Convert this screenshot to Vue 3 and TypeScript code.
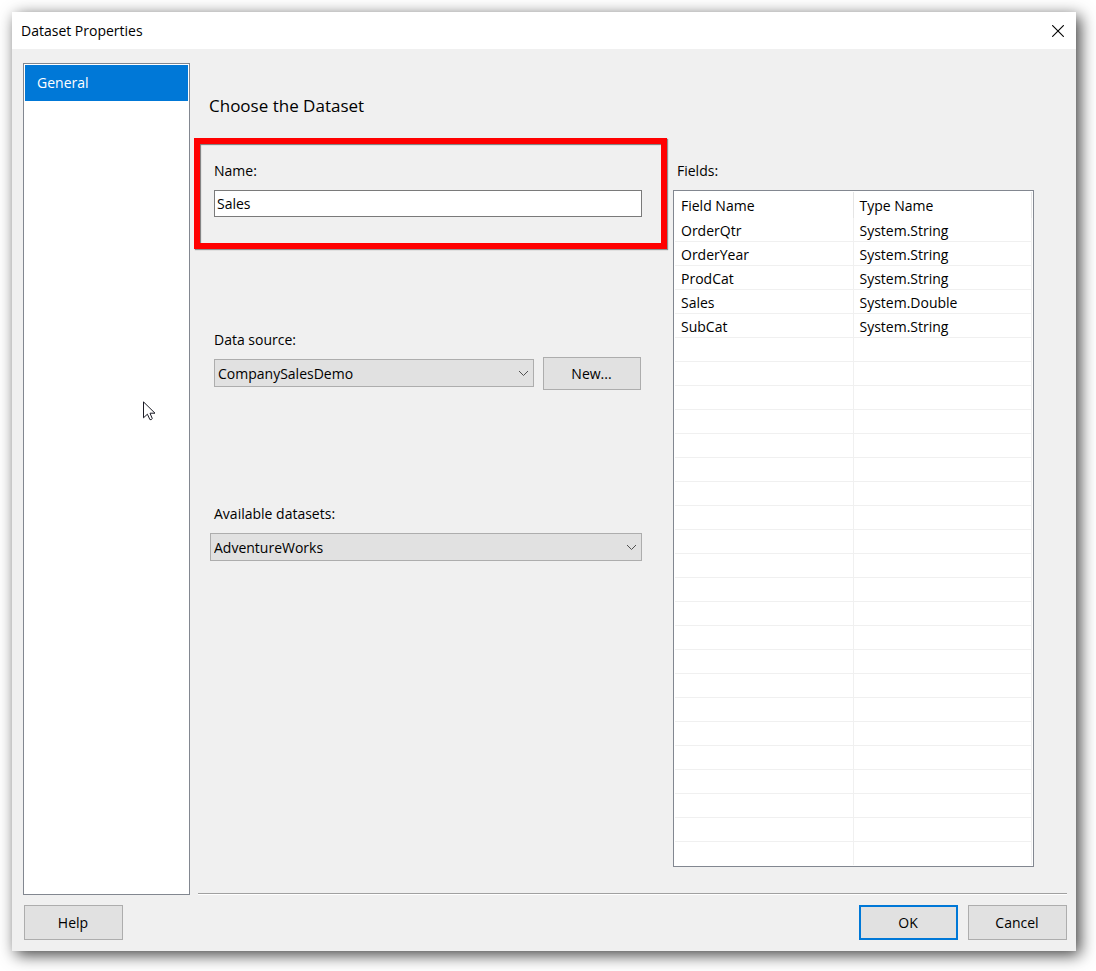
<script setup lang="ts">
import { ref } from 'vue'

interface Field {
  name: string
  type: string
}

const pages = ['General']
const activePage = ref('General')
const datasetName = ref('Sales')
const dataSource = ref('CompanySalesDemo')
const dataset = ref('AdventureWorks')

const fields: Field[] = [
  { name: 'OrderQtr', type: 'System.String' },
  { name: 'OrderYear', type: 'System.String' },
  { name: 'ProdCat', type: 'System.String' },
  { name: 'Sales', type: 'System.Double' },
  { name: 'SubCat', type: 'System.String' },
]
</script>

<template>
  <div class="screen">
    <section class="dialog" role="dialog" aria-labelledby="dialog-title">
      <header class="titlebar">
        <h1 id="dialog-title">Dataset Properties</h1>
        <button class="close" type="button" aria-label="Close">
          <svg width="12" height="12" viewBox="0 0 12 12" aria-hidden="true">
            <path d="M0.2 0.2L11.8 11.8M11.8 0.2L0.2 11.8" fill="none" stroke="#000" stroke-width="1.1" />
          </svg>
        </button>
      </header>

      <div class="body">
        <nav class="pages" aria-label="Pages">
          <button
            v-for="page in pages"
            :key="page"
            type="button"
            class="page"
            :class="{ active: page === activePage }"
            @click="activePage = page"
          >
            {{ page }}
          </button>
          <svg class="pointer" width="13" height="20" viewBox="0 0 13 20" aria-hidden="true">
            <path
              d="M0.5 0.9V16.8L4.4 13.2L6.9 18.6Q8.2 19.2 9.3 17.6L7 12.2H12Z"
              fill="#fff"
              stroke="#1a1a24"
              stroke-width="1"
            />
          </svg>
        </nav>

        <main class="content">
          <h2>Choose the Dataset</h2>
          <div class="columns">
            <form class="form" @submit.prevent>
              <div class="highlight">
                <label for="name">Name:</label>
                <input id="name" v-model="datasetName" type="text" />
              </div>

              <div class="group source">
                <label for="source">Data source:</label>
                <div class="row">
                  <div class="combo">
                    <select id="source" v-model="dataSource">
                      <option>CompanySalesDemo</option>
                    </select>
                    <svg class="chevron" width="11" height="7" viewBox="0 0 11 7" aria-hidden="true">
                      <path d="M1 1L5.5 5.5L10 1" fill="none" stroke="#505050" stroke-width="1" />
                    </svg>
                  </div>
                  <button class="btn small" type="button">New...</button>
                </div>
              </div>

              <div class="group available">
                <label for="dataset">Available datasets:</label>
                <div class="combo">
                  <select id="dataset" v-model="dataset">
                    <option>AdventureWorks</option>
                  </select>
                  <svg class="chevron" width="11" height="7" viewBox="0 0 11 7" aria-hidden="true">
                    <path d="M1 1L5.5 5.5L10 1" fill="none" stroke="#505050" stroke-width="1" />
                  </svg>
                </div>
              </div>
            </form>

            <section class="fields">
              <h3 id="fields-label">Fields:</h3>
              <div class="list">
                <div class="grid">
                  <table aria-labelledby="fields-label">
                    <thead>
                      <tr>
                        <th scope="col">Field Name</th>
                        <th scope="col">Type Name</th>
                      </tr>
                    </thead>
                    <tbody>
                      <tr v-for="field in fields" :key="field.name">
                        <td>{{ field.name }}</td>
                        <td>{{ field.type }}</td>
                      </tr>
                    </tbody>
                  </table>
                </div>
              </div>
            </section>
          </div>
          <hr />
        </main>
      </div>

      <footer class="actions">
        <button class="btn help" type="button">Help</button>
        <button class="btn primary" type="button">OK</button>
        <button class="btn" type="button">Cancel</button>
      </footer>
    </section>
  </div>
</template>

<style>
body {
  background: #fff;
}
</style>

<style scoped>
* {
  box-sizing: border-box;
}

.screen {
  display: flex;
  min-height: 100vh;
  padding: 12px 20px 20px 12px;
  overflow: hidden;
  color: #000;
  font-family: 'Segoe UI', 'Open Sans', 'Noto Sans', sans-serif;
  font-size: 14px;
  line-height: 20px;
}

h1,
h2,
h3 {
  margin: 0;
  font-size: 14px;
  font-weight: 400;
}

button,
input,
select {
  font: inherit;
  color: inherit;
  border-radius: 0;
}

.dialog {
  flex: 1;
  display: flex;
  flex-direction: column;
  min-width: 0;
  background: #f0f0f0;
  box-shadow: 4px 4px 15px rgba(0, 0, 0, 0.75);
}

.titlebar {
  display: flex;
  align-items: center;
  justify-content: space-between;
  height: 37px;
  padding: 0 10px 0 9px;
  background: #fff;
}

.close {
  display: flex;
  padding: 2px;
  border: 0;
  background: none;
}

.body {
  flex: 1;
  display: flex;
  padding: 14px 9px 0 11px;
}

.pages {
  position: relative;
  flex: 0 0 167px;
  padding: 1px;
  border: 1px solid #828790;
  background: #fff;
}

.page {
  display: block;
  width: 100%;
  height: 36px;
  padding: 0 12px;
  border: 0;
  background: none;
  text-align: left;
}

.page.active {
  background: #0078d7;
  color: #fff;
}

.pointer {
  position: absolute;
  top: 337px;
  left: 119px;
}

.content {
  flex: 1;
  display: flex;
  flex-direction: column;
  min-width: 0;
}

h2 {
  margin: 31px 0 20px 19px;
  font-size: 17px;
  line-height: 24px;
}

.columns {
  flex: 1;
  display: grid;
  grid-template-columns: 473fr 361fr;
  gap: 6px;
  margin: 0 33px 26px 4px;
}

.form {
  display: flex;
  flex-direction: column;
}

label {
  display: block;
  margin-bottom: 9px;
}

.highlight {
  padding: 17px 19px 26px 14px;
  border: 6px solid #f00;
  box-shadow:
    1px 1px 1px rgba(0, 0, 0, 0.4),
    inset 1px 1px 1px rgba(0, 0, 0, 0.5);
}

.highlight input {
  display: block;
  width: 100%;
  height: 27px;
  padding: 0 2px;
  border: 1px solid #7a7a7a;
  background: #fff;
}

.group {
  padding: 0 25px 0 20px;
}

.source {
  margin-top: 81px;
  padding-right: 26px;
}

.source label {
  margin-bottom: 7px;
}

.available {
  margin-top: 114px;
  padding-left: 16px;
}

.available label {
  padding-left: 4px;
}

.row {
  display: flex;
  align-items: flex-start;
  gap: 9px;
}

.row .combo {
  margin-top: 2px;
}

.combo {
  flex: 1;
  display: grid;
  align-items: center;
}

.combo > * {
  grid-area: 1 / 1;
}

.combo select {
  width: 100%;
  height: 28px;
  padding: 2px 24px 0 3px;
  border: 1px solid #adadad;
  background: #e1e1e1;
  appearance: none;
}

.chevron {
  justify-self: end;
  margin-right: 5px;
  pointer-events: none;
}

.btn {
  width: 99px;
  height: 35px;
  padding: 0 1px 0 0;
  border: 1px solid #adadad;
  background: #e1e1e1;
}

.btn.small {
  width: 98px;
  height: 33px;
}

.btn.primary {
  border: 2px solid #0078d7;
}

.fields {
  display: flex;
  flex-direction: column;
  padding-top: 23px;
}

h3 {
  margin: 0 0 9px 4px;
}

.list {
  flex: 1;
  display: flex;
  padding: 1px;
  border: 1px solid #828790;
  background: #fff;
}

/* Grid lines carry on below the last record down to the end of the list. */
.grid {
  flex: 1;
  background:
    linear-gradient(#f0f0f0, #f0f0f0) 50% 0 / 1px 100% no-repeat,
    linear-gradient(#f0f0f0, #f0f0f0) 100% 0 / 1px 100% no-repeat,
    repeating-linear-gradient(transparent 0 23px, #f0f0f0 23px 24px) 0 26px no-repeat;
}

table {
  width: 100%;
  border-collapse: separate;
  border-spacing: 0;
  table-layout: fixed;
}

th,
td {
  height: 24px;
  padding: 2px 6px 0;
  font-weight: 400;
  text-align: left;
}

th {
  height: 26px;
  border-right: 1px solid #e5e5e5;
  background: #fff;
}

hr {
  width: calc(100% - 8px);
  height: 2px;
  margin: 0 0 0 8px;
  border: 0;
  border-top: 1px solid #a0a0a0;
  background: #fff;
}

.actions {
  display: flex;
  gap: 10px;
  padding: 10px 9px 11px 12px;
}

.help {
  margin-right: auto;
}
</style>
